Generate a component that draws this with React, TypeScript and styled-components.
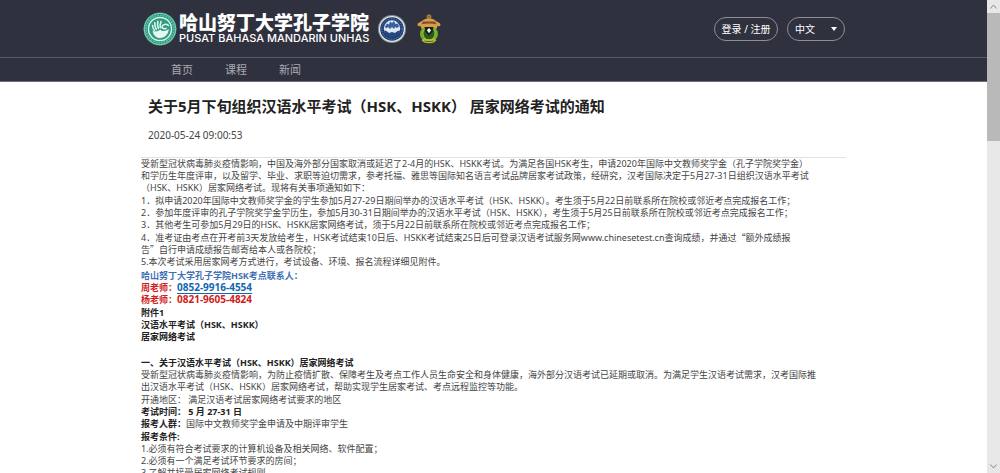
import React from 'react';
import styled, { createGlobalStyle } from 'styled-components';

const GlobalStyle = createGlobalStyle`
  * { box-sizing: border-box; }
  body {
    margin: 0;
    background: #fff;
    color: #444;
    font-family: "Noto Sans", "Noto Sans CJK SC", sans-serif;
    font-size: 9px;
  }
`;

const Window = styled.div`
  display: flex;
  height: 100vh;
  overflow: hidden;
`;

const Page = styled.div`
  flex: 1;
  min-width: 0;
  overflow: hidden;
`;

const Container = styled.div`
  width: 100%;
  max-width: 705px;
  margin: 0 auto;
`;

const Header = styled.header`
  background: #2f313e;
  color: #fff;
  border-bottom: 1px solid #6b6c76;
`;

const TopBar = styled.div`
  border-bottom: 1px solid #575964;
`;

const TopBarInner = styled(Container)`
  display: flex;
  align-items: center;
  justify-content: space-between;
  height: 57px;
  padding: 0 1px;
`;

const Brand = styled.a`
  display: flex;
  align-items: center;
  padding-left: 1px;
  color: inherit;
  text-decoration: none;
`;

const BrandText = styled.span`
  display: flex;
  flex-direction: column;
  margin: 0 8px 0 2px;
  white-space: nowrap;
`;

const BrandName = styled.span`
  font-family: "Noto Sans CJK SC", sans-serif;
  font-weight: 900;
  font-size: 19px;
  line-height: 20px;
`;

const BrandSub = styled.span`
  font-family: Inter, sans-serif;
  font-weight: 500;
  font-size: 11px;
  line-height: 13px;
`;

const Emblems = styled.span`
  display: flex;
  align-items: center;
  gap: 10px;
`;

const Actions = styled.div`
  display: flex;
  gap: 9px;
`;

const LoginButton = styled.button`
  width: 64px;
  height: 24px;
  padding: 0;
  border: 1px solid #8d8e96;
  border-radius: 12px;
  background: transparent;
  color: #fff;
  font: inherit;
  font-size: 10px;
  white-space: nowrap;
`;

const LanguageBox = styled.label`
  display: grid;
  align-items: center;
  width: 58px;
  height: 24px;

  & > * { grid-area: 1 / 1; }
  & > svg {
    justify-self: end;
    margin-right: 8px;
    pointer-events: none;
  }
`;

const LanguageSelect = styled.select`
  appearance: none;
  width: 100%;
  height: 100%;
  padding: 0 7px;
  border: 1px solid #8d8e96;
  border-radius: 12px;
  background: transparent;
  color: #fff;
  font: inherit;
  font-size: 10px;
`;

const Nav = styled.nav`
  display: flex;
  align-items: center;
  gap: 32px;
  height: 23px;
  padding-left: 30px;
`;

const NavLink = styled.a`
  color: #a9aab2;
  font-size: 11px;
  line-height: 16px;
  text-decoration: none;
`;

const ArticleHead = styled.div`
  padding: 14px 7px 16px;
  border-bottom: 1px solid #e2e2e2;
`;

const Title = styled.h1`
  margin: 0 0 13px;
  color: #222;
  font-size: 15px;
  line-height: 20px;
  font-weight: 700;
  white-space: pre;
`;

const PublishDate = styled.time`
  display: block;
  font-size: 10px;
  line-height: 12px;
`;

const Body = styled.div`
  display: flex;
  flex-direction: column;
  gap: 2px;
`;

const Section = styled.section`
  display: flex;
  flex-direction: column;
  gap: 1px;
`;

const Block = styled.div`
  min-height: 12px;
`;

const Line = styled.p<{ $tone?: string; $strong?: boolean }>`
  margin: 0;
  line-height: 12px;
  white-space: pre;
  color: ${(p) => p.$tone ?? 'inherit'};
  font-weight: ${(p) => (p.$strong ? 700 : 400)};
`;

const Label = styled.strong`
  color: #222;
`;

const WideQuote = styled.span`
  font-family: "Noto Sans CJK SC", sans-serif;
  line-height: 1;
`;

const Phone = styled.a<{ $tone: string; $underlined?: boolean }>`
  color: ${(p) => p.$tone};
  font-size: 10px;
  line-height: 10px;
  text-decoration: ${(p) => (p.$underlined ? 'underline' : 'none')};
  text-underline-offset: 2px;
`;

const Scrollbar = styled.div`
  display: flex;
  flex-direction: column;
  flex: none;
  width: 13px;
  background: #e7e7e7;
`;

const ScrollArrow = styled.span`
  display: grid;
  place-items: center;
  height: 13px;
`;

const ScrollTrack = styled.div`
  display: grid;
  grid-template-rows: 2fr 5fr;
  flex: 1;
`;

const ScrollThumb = styled.div`
  background: #b9b9b9;
`;

const INK = '#222';
const BLUE = '#3f6fb5';
const LINK = '#1267b0';
const RED = '#d01c20';

function HandSeal() {
  return (
    <svg width="34" height="34" viewBox="0 0 34 34" aria-hidden="true">
      <circle cx="17" cy="17" r="16.5" fill="#2d9c80" />
      <circle cx="17" cy="17" r="15.8" fill="none" stroke="#8fd3bf" strokeWidth="0.9" />
      <circle cx="17" cy="17" r="13.8" fill="none" stroke="#6fbfa8" strokeWidth="1.6" strokeDasharray="1.5 1.2" />
      <circle cx="17" cy="17" r="11.5" fill="#2d9c80" stroke="#d9f2e9" strokeWidth="1.4" />
      <g fill="none" stroke="#e6f7f1" strokeLinecap="round">
        <path d="M9.500 13.500c.2 2 .8 3.500 2 5" strokeWidth="1.500" />
        <path d="M11.800 10.800c-.2 2.500.3 4.500 1.500 6.500" strokeWidth="1.600" />
        <path d="M14.800 9.500c-.5 2.500-.2 4.800.6 6.800" strokeWidth="1.600" />
        <path d="M18 9.500c-.8 2.200-1 4-.6 6.200" strokeWidth="1.600" />
        <path d="M25.500 13.500c-2.500-2-6-1.200-6.500 1.200-.4 2 2.500 2.500 4.200 1.600" strokeWidth="1.500" />
      </g>
      <path d="M9.500 18.500c2.500 1.800 5.500.5 8-.8 1.500 1.800 5 2 8.300-.6-.2 4.800-3.800 9-8.800 9-3.800 0-6.800-3-7.500-7.600z" fill="#e6f7f1" />
    </svg>
  );
}

function BlueSeal() {
  return (
    <svg width="30" height="30" viewBox="0 0 30 30" aria-hidden="true">
      <circle cx="15" cy="15" r="14" fill="#8d9398" />
      <circle cx="15" cy="15" r="13" fill="#e2e6e6" />
      <circle cx="15" cy="15" r="11.800" fill="#1f3f73" />
      <circle cx="15" cy="15" r="10.200" fill="none" stroke="#6f8cb4" strokeWidth="1" strokeDasharray="1.200 1.400" />
      <circle cx="15" cy="14.500" r="8.200" fill="#dfe8f3" />
      <path d="M8 12.500l2-3 2 1 1-3 2 1.500L17 7l1.500 3 2.500-.5 1 3-2 1.500-2-1-1 2-2-2-2 2-2-2-2 1.500z" fill="#3763a3" />
      <path d="M7 16.500c2 .2 3.500 1 5 2.500l3-1 3 1c1.500-1.500 3-2.300 5-2.500-.5 4.500-4 6.500-8 6.500s-7.500-2-8-6.500z" fill="#24487f" />
    </svg>
  );
}

function UniversityCrest() {
  return (
    <svg width="24" height="30" viewBox="0 0 24 30" aria-hidden="true">
      <ellipse cx="12" cy="20" rx="9" ry="8.500" fill="#6fae25" />
      <ellipse cx="12" cy="19.500" rx="6" ry="6.500" fill="#2f5a1e" stroke="#a9c93a" strokeWidth="0.800" />
      <circle cx="12" cy="2.800" r="2" fill="#8f6d2c" stroke="#c9a552" strokeWidth="0.700" />
      <path d="M0.500 10.500c0-2 4-2.500 6.500-5C8.500 4 15.500 4 17 5.500c2.500 2.500 6.500 3 6.500 5 0 1.800-2 2-3.500 1.700v2.300H4v-2.300c-1.500.3-3.500.1-3.500-1.700z" fill="#d2a04a" />
      <path d="M6 7.500h12l1.500 2.700c-5-1-10-1-15 0z" fill="#8a4a2a" />
      <path d="M7.500 13h9l-1 5-3.500 3.500-3.500-3.500z" fill="#16201a" />
      <path d="M12 14l2.200 2.200-2.200 3-2.200-3z" fill="#f2f2e6" />
      <path d="M4.500 26l3-1.500c3 1 6 1 9 0l3 1.500-2.500 2.500c-3.500 1-6.500 1-10 0z" fill="#b9bd35" />
      <path d="M7.500 27c3 .8 6 .8 9 0" stroke="#4c6b1f" fill="none" />
    </svg>
  );
}

export default function App() {
  return (
    <>
      <GlobalStyle />
      <Window>
        <Page>
          <Header>
            <TopBar>
              <TopBarInner>
                <Brand href="#">
                  <HandSeal />
                  <BrandText>
                    <BrandName>哈山努丁大学孔子学院</BrandName>
                    <BrandSub>PUSAT BAHASA MANDARIN UNHAS</BrandSub>
                  </BrandText>
                  <Emblems>
                    <BlueSeal />
                    <UniversityCrest />
                  </Emblems>
                </Brand>
                <Actions>
                  <LoginButton type="button">登录 / 注册</LoginButton>
                  <LanguageBox>
                    <LanguageSelect aria-label="语言" defaultValue="zh">
                      <option value="zh">中文</option>
                    </LanguageSelect>
                    <svg width="6" height="4" viewBox="0 0 6 4" aria-hidden="true">
                      <path d="M0 0h6L3 4z" fill="#fff" />
                    </svg>
                  </LanguageBox>
                </Actions>
              </TopBarInner>
            </TopBar>
            <Container>
              <Nav>
                <NavLink href="#">首页</NavLink>
                <NavLink href="#">课程</NavLink>
                <NavLink href="#">新闻</NavLink>
              </Nav>
            </Container>
          </Header>

          <Container as="main">
            <ArticleHead>
              <Title>关于5月下旬组织汉语水平考试（HSK、HSKK） 居家网络考试的通知</Title>
              <PublishDate>2020-05-24 09:00:53</PublishDate>
            </ArticleHead>
            <Body>
              <Section>
                <Block>
                  <Line>
                    受新型冠状病毒肺炎疫情影响，中国及海外部分国家取消或延迟了2-4月的HSK、HSKK考试。为满足各国HSK考生，申请2020年国际中文教师奖学金（孔子学院奖学金）
                    <br />
                    和学历生年度评审，以及留学、毕业、求职等迫切需求，参考托福、雅思等国际知名语言考试品牌居家考试政策，经研究，汉考国际决定于5月27-31日组织汉语水平考试
                    <br />
                    （HSK、HSKK）居家网络考试。现将有关事项通知如下：
                  </Line>
                </Block>
                <Block>
                  <Line>1．拟申请2020年国际中文教师奖学金的学生参加5月27-29日期间举办的汉语水平考试（HSK、HSKK）。考生须于5月22日前联系所在院校或邻近考点完成报名工作；</Line>
                  <Line>2．参加年度评审的孔子学院奖学金学历生，参加5月30-31日期间举办的汉语水平考试（HSK、HSKK），考生须于5月25日前联系所在院校或邻近考点完成报名工作；</Line>
                  <Line>3．其他考生可参加5月29日的HSK、HSKK居家网络考试，须于5月22日前联系所在院校或邻近考点完成报名工作；</Line>
                </Block>
                <Block>
                  <Line>
                    4．准考证由考点在开考前3天发放给考生，HSK考试结束10日后、HSKK考试结束25日后可登录汉语考试服务网www.chinesetest.cn查询成绩，并通过<WideQuote>“</WideQuote>额外成绩报
                    <br />
                    告<WideQuote>”</WideQuote>自行申请成绩报告邮寄给本人或各院校；
                  </Line>
                  <Line>5.本次考试采用居家网考方式进行，考试设备、环境、报名流程详细见附件。</Line>
                </Block>
              </Section>
              <Section>
                <Block>
                  <Line $tone={BLUE} $strong>哈山努丁大学孔子学院HSK考点联系人：</Line>
                  <Line $tone={RED} $strong>周老师：<Phone $tone={LINK} $underlined href="tel:085299164554">0852-9916-4554</Phone></Line>
                  <Line $tone={RED} $strong>杨老师：<Phone $tone={RED} href="tel:082196054824">0821-9605-4824</Phone></Line>
                </Block>
                <Block>
                  <Line $tone={INK} $strong>附件1</Line>
                  <Line $tone={INK} $strong>汉语水平考试（HSK、HSKK）</Line>
                  <Line $tone={INK} $strong>居家网络考试</Line>
                </Block>
                <Block />
                <Block>
                  <Line $tone={INK} $strong>一、关于汉语水平考试（HSK、HSKK）居家网络考试</Line>
                  <Line>
                    受新型冠状病毒肺炎疫情影响，为防止疫情扩散、保障考生及考点工作人员生命安全和身体健康，海外部分汉语考试已延期或取消。为满足学生汉语考试需求，汉考国际推
                    <br />
                    出汉语水平考试（HSK、HSKK）居家网络考试，帮助实现学生居家考试、考点远程监控等功能。
                  </Line>
                </Block>
                <Block>
                  <Line>开通地区： 满足汉语考试居家网络考试要求的地区</Line>
                  <Line $tone={INK} $strong>考试时间： 5 月 27-31 日</Line>
                  <Line><Label>报考人群：</Label>国际中文教师奖学金申请及中期评审学生</Line>
                </Block>
                <Block>
                  <Line $tone={INK} $strong>报考条件:</Line>
                  <Line>1.必须有符合考试要求的计算机设备及相关网络、软件配置；</Line>
                  <Line>2.必须有一个满足考试环节要求的房间；</Line>
                  <Line>3.了解并接受居家网络考试规则</Line>
                </Block>
              </Section>
            </Body>
          </Container>
        </Page>
        <Scrollbar aria-hidden="true">
          <ScrollArrow>
            <svg width="7" height="5" viewBox="0 0 7 5"><path d="M.5 4.500l3-3.500 3 3.500" fill="none" stroke="#8a8a8a" /></svg>
          </ScrollArrow>
          <ScrollTrack><ScrollThumb /></ScrollTrack>
          <ScrollArrow>
            <svg width="7" height="5" viewBox="0 0 7 5"><path d="M.5.5l3 3.500 3-3.500" fill="none" stroke="#8a8a8a" /></svg>
          </ScrollArrow>
        </Scrollbar>
      </Window>
    </>
  );
}
